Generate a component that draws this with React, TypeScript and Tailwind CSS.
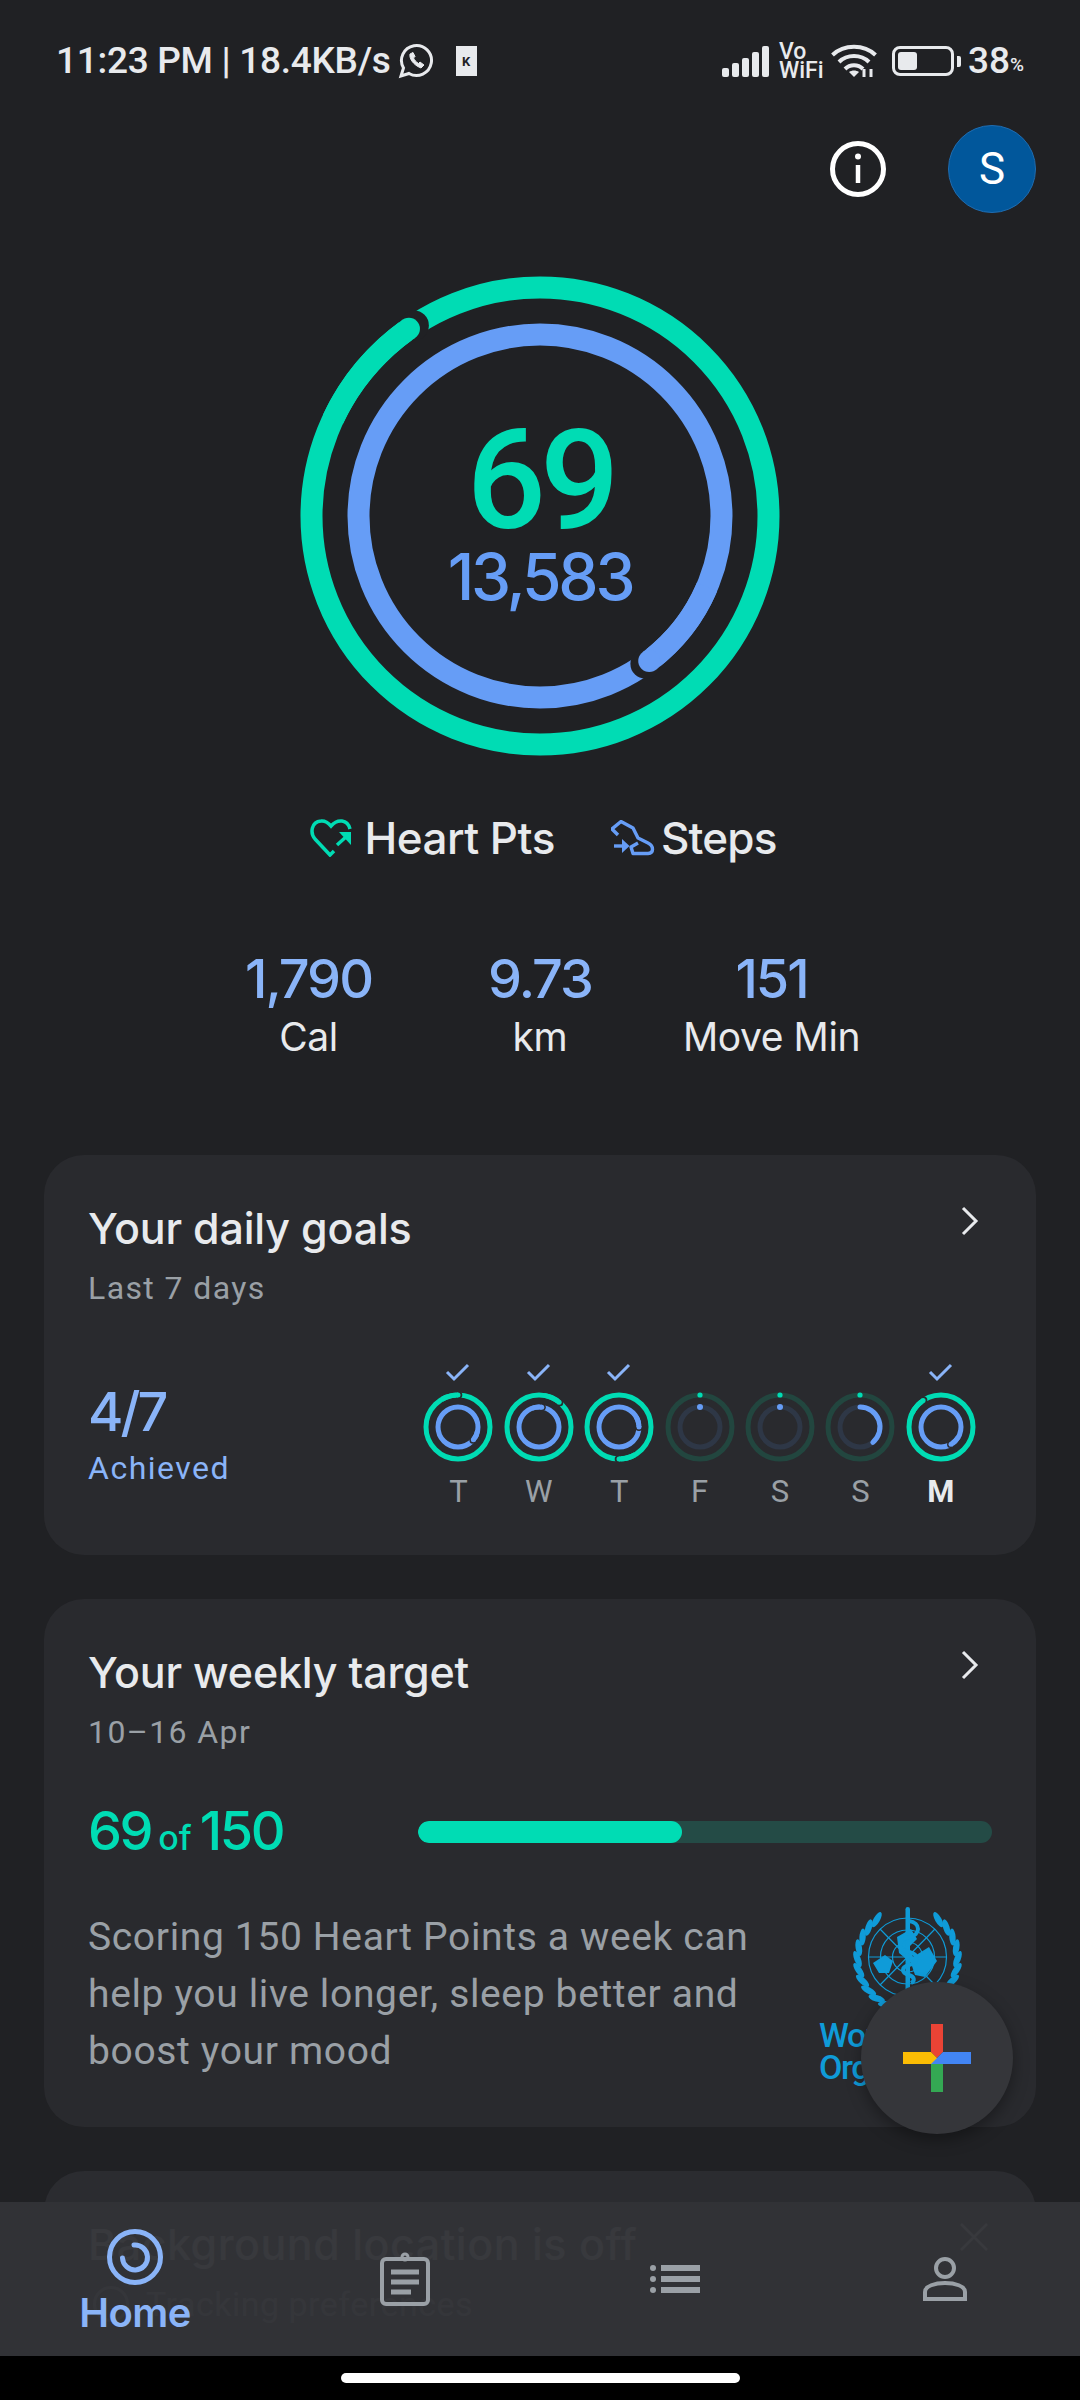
const GREEN = "#00dcb4";
const BLUE = "#669df6";

const polar = (cx: number, cy: number, r: number, deg: number) => {
  const a = (deg * Math.PI) / 180;
  return [cx + r * Math.sin(a), cy - r * Math.cos(a)];
};

const arc = (cx: number, cy: number, r: number, from: number, to: number) => {
  const [x1, y1] = polar(cx, cy, r, from);
  const [x2, y2] = polar(cx, cy, r, to);
  const large = to - from > 180 ? 1 : 0;
  return `M${x1} ${y1} A${r} ${r} 0 ${large} 1 ${x2} ${y2}`;
};

// a ring that went over its goal: full circle, then the second lap's head with a small gap round it
type LapProps = { c: number; r: number; w: number; color: string; end: number; gap: string; pad: number };

const LapRing = ({ c, r, w, color, end, gap, pad }: LapProps) => {
  const [hx, hy] = polar(c, c, r, end);
  const [sx, sy] = polar(c, c, r, end + 1.5);
  return (
    <>
      <circle cx={c} cy={c} r={r} fill="none" stroke={color} strokeWidth={w} />
      <circle cx={sx} cy={sy} r={w / 2 + pad} fill={gap} />
      <path d={arc(c, c, r, end - 30, end)} fill="none" stroke={color} strokeWidth={w} />
      <circle cx={hx} cy={hy} r={w / 2} fill={color} />
    </>
  );
};

type DayProps = { day: string; done?: boolean; today?: boolean; green?: number; blue?: number };

const DayRing = ({ day, done, today, green = 0, blue = 0 }: DayProps) => (
  <div className="flex w-[80.4px] flex-col items-center">
    <div className="flex h-[30px] items-center">
      {done && (
        <svg width="26" height="20" viewBox="0 0 26 20" fill="none" stroke="#8ab4f8" strokeWidth="3">
          <path d="M2 9 L9 16 L23 2" />
        </svg>
      )}
    </div>
    <svg width="72" height="72" viewBox="0 0 72 72" className="mt-[3px]">
      {done ? (
        <>
          <LapRing c={36} r={32} w={5} color={GREEN} end={green} gap="#292a2e" pad={1} />
          <LapRing c={36} r={20} w={5} color={BLUE} end={blue} gap="#292a2e" pad={1} />
        </>
      ) : (
        <>
          <circle cx="36" cy="36" r="32" fill="none" stroke="#22463f" strokeWidth="5" />
          <circle cx="36" cy="36" r="20" fill="none" stroke="#2e3746" strokeWidth="5" />
          <circle cx="36" cy="4" r="2.6" fill={GREEN} />
          {blue > 0 ? (
            <path d={arc(36, 36, 20, 0, blue)} fill="none" stroke={BLUE} strokeWidth="5" strokeLinecap="round" />
          ) : (
            <circle cx="36" cy="16" r="3" fill={BLUE} />
          )}
        </>
      )}
    </svg>
    <span
      className={`mt-[11px] font-['Roboto',sans-serif] text-[31px] leading-[36px] ${
        today ? "font-bold text-[#e8eaed]" : "text-[#9aa0a6]"
      }`}
    >
      {day}
    </span>
  </div>
);

const WhoLogo = () => {
  const leaves = [];
  for (let i = 0; i < 11; i++) {
    const deg = 38 + i * 13;
    const [rx, ry] = polar(56.5, 52, 50, deg);
    const [lx, ly] = polar(56.5, 52, 50, -deg);
    const tilt = deg - 90 + 22;
    leaves.push(
      <ellipse key={`r${i}`} cx={rx} cy={ry} rx="3.2" ry="8.5" transform={`rotate(${tilt} ${rx} ${ry})`} />,
      <ellipse key={`l${i}`} cx={lx} cy={ly} rx="3.2" ry="8.5" transform={`rotate(${-tilt} ${lx} ${ly})`} />
    );
  }
  return (
    <svg width="113" height="108" viewBox="0 0 113 108" fill="#0f9bd8">
      {leaves}
      <g fill="none" stroke="#0f9bd8" strokeWidth="1.2">
        <circle cx="56.5" cy="50" r="39" />
        <circle cx="56.5" cy="50" r="27" />
        <circle cx="56.5" cy="50" r="15" />
        <path d="M17.5 50 H95.5 M29 22 L84 78 M84 22 L29 78" />
      </g>
      <path d="M22 56 L34 48 L42 54 L38 66 L28 66 Z M46 30 L60 22 L66 32 L58 40 L62 50 L78 40 L86 54 L74 70 L64 68 L60 56 L48 46 Z" />
      <rect x="54.5" y="0" width="4.5" height="100" rx="2.2" />
      <path
        d="M58 14 C70 16 70 28 58 30 C46 33 46 43 58 45 C68 47 68 55 58 58 C50 60 50 66 58 68 C64 70 64 74 60 76"
        fill="none"
        stroke="#0f9bd8"
        strokeWidth="4"
      />
    </svg>
  );
};

const Chevron = () => (
  <svg
    width="18"
    height="30"
    viewBox="0 0 18 30"
    fill="none"
    stroke="#e8eaed"
    strokeWidth="3"
    className="absolute right-[13px] top-[3px]"
  >
    <path d="M2 2 L15 15 L2 28" />
  </svg>
);

const CardHeader = ({ title, sub }: { title: string; sub: string }) => (
  <div className="relative">
    <h2 className="font-['Inter',sans-serif] text-[43px] font-medium leading-[50px] tracking-[-0.2px] text-[#e8eaed]">
      {title}
    </h2>
    <p className="mt-[16px] font-['Roboto',sans-serif] text-[32px] leading-[38px] tracking-[1.4px] text-[#9aa0a6]">
      {sub}
    </p>
    <Chevron />
  </div>
);

const Stat = ({ value, label }: { value: string; label: string }) => (
  <div className="flex w-[231.5px] flex-col items-center">
    <span className="font-['Inter',sans-serif] text-[54px] font-medium leading-[60px] tracking-[-2px] text-[#8ab4f8]">
      {value}
    </span>
    <span className="mt-[5px] font-['Inter',sans-serif] text-[39px] leading-[46px] tracking-[-0.4px] text-[#e8eaed]">
      {label}
    </span>
  </div>
);

export default function App() {
  return (
    <div className="relative h-[2400px] w-[1080px] overflow-hidden bg-[#202124]">
      {/* Barra de estado */}
      <div className="flex h-[120px] items-center justify-between pl-[56px] pr-[56px] pt-[2px] font-['Roboto',sans-serif] text-[#e8eaed]">
        <div className="flex items-center">
          <span className="text-[37px] font-medium leading-[44px] tracking-[-0.3px]">11:23 PM | 18.4KB/s</span>
          <svg width="36" height="36" viewBox="0 0 36 36" fill="none" stroke="#e8eaed" strokeWidth="3" className="ml-[7px]">
            <path d="M3 33 L5.5 25 A15 15 0 1 1 11 30.5 Z" />
            <path
              d="M12 11 C11 15 15 22 23 25 L26 22 L22 19 L20.5 20.5 C18 19 16.5 17 15.5 15 L17 13.5 L15 9.5 Z"
              fill="#e8eaed"
              strokeWidth="1"
            />
          </svg>
          <div className="ml-[22px] flex h-[30px] w-[21px] items-center justify-center border-y-[2px] border-[#e8eaed] bg-[#e8eaed] text-[13px] font-bold leading-none text-[#202124]">
            K
          </div>
        </div>
        <div className="flex items-center">
          <svg width="48" height="31" viewBox="0 0 48 31" fill="#e8eaed">
            <rect x="0" y="22" width="7" height="9" rx="2" />
            <rect x="10" y="17" width="7" height="14" rx="2" />
            <rect x="20" y="12" width="7" height="19" rx="2" />
            <rect x="30" y="6" width="7" height="25" rx="2" />
            <rect x="40" y="0" width="7" height="31" rx="2" />
          </svg>
          <div className="ml-[9px] flex w-[44px] flex-col text-[23px] font-medium leading-[19px]">
            <span>Vo</span>
            <span>WiFi</span>
          </div>
          <svg width="46" height="34" viewBox="0 0 46 34" fill="none" stroke="#e8eaed" strokeWidth="4" className="ml-[8px]">
            <path d="M1.5 11 C13 0 33 0 44.5 11" />
            <path d="M8 18 C16 10 30 10 38 18" />
            <path d="M14 25 C19 20 27 20 32 25" />
            <path d="M23 33 L18 28 C21 26 25 26 28 28 Z" fill="#e8eaed" stroke="none" />
            <path d="M33 33 V25 M40 33 V25" strokeWidth="3" />
          </svg>
          <div className="relative ml-[15px] flex h-[30px] w-[62px] items-center rounded-[8px] border-[3px] border-[#e8eaed] pl-[3px]">
            <div className="h-[18px] w-[19px] rounded-[3px] bg-[#e8eaed]" />
          </div>
          <div className="ml-[3px] h-[11px] w-[4px] rounded-r-[2px] bg-[#e8eaed]" />
          <span className="ml-[7px] text-[37px] font-medium leading-[44px]">38</span>
          <span className="mt-[8px] text-[19px] font-medium leading-[24px]">%</span>
        </div>
      </div>

      {/* Acciones */}
      <div className="mt-[5px] flex items-center justify-end gap-[61px] pr-[44px]">
        <svg width="58" height="58" viewBox="0 0 58 58" fill="none" stroke="#ffffff" strokeWidth="5">
          <circle cx="29" cy="29" r="25.5" />
          <path d="M29 25 V43" strokeWidth="4.5" />
          <circle cx="29" cy="16.5" r="3" fill="#ffffff" stroke="none" />
        </svg>
        <div className="flex h-[88px] w-[88px] items-center justify-center rounded-full border border-[#1f6cb0] bg-[#01579b] font-['Roboto',sans-serif] text-[44px] text-white">
          S
        </div>
      </div>

      {/* Anillos */}
      <div className="relative mx-auto mt-[63px] flex h-[480px] w-[480px] flex-col items-center justify-center">
        <svg width="480" height="480" viewBox="0 0 480 480" className="absolute inset-0">
          <LapRing c={240} r={228.5} w={22} color={GREEN} end={325} gap="#202124" pad={4} />
          <LapRing c={240} r={181.5} w={22} color={BLUE} end={143} gap="#202124" pad={4} />
        </svg>
        <span className="mt-[2px] font-['Roboto',sans-serif] text-[140px] font-medium leading-[122px] tracking-[-6px] text-[#00dcb4]">
          69
        </span>
        <span className="mt-[-2px] font-['Inter',sans-serif] text-[64px] font-medium leading-[76px] tracking-[-3.2px] text-[#669df6]">
          13,583
        </span>
      </div>

      {/* Leyenda */}
      <div className="mt-[57px] flex items-center justify-center pl-[7px]">
        <svg width="42" height="38" viewBox="0 0 42 38" fill="none" stroke={GREEN} strokeWidth="3.5">
          <path d="M24 32 L20 36 L5 20 C0 14 1 3 11 2 C15 1.5 18 3.5 21 7 C24 3.5 28 1.5 32 2 C36 2.5 39 6 40 10" />
          <path d="M27 26 L37 17" />
          <path d="M29 13 H41 V26 Z" fill={GREEN} stroke="none" />
        </svg>
        <span className="ml-[12px] font-['Inter',sans-serif] text-[44px] font-medium leading-[50px] tracking-[-0.5px] text-[#e8eaed]">
          Heart Pts
        </span>
        <svg
          width="44"
          height="36"
          viewBox="0 0 44 36"
          fill="none"
          stroke={BLUE}
          strokeWidth="3.4"
          strokeLinejoin="round"
          className="ml-[56px]"
        >
          <path d="M7 15 L1 9 L10 1.5 L22 8 L27 18 L37 23 C43 26 43 33 37 33.5 H22 L20 27 L27 23" />
          <path d="M3 26 H12" />
          <path d="M11 19 L18.5 26 L11 33 Z" fill={BLUE} stroke="none" />
        </svg>
        <span className="ml-[6px] font-['Inter',sans-serif] text-[44px] font-medium leading-[50px] tracking-[-0.8px] text-[#e8eaed]">
          Steps
        </span>
      </div>

      {/* Estadísticas */}
      <div className="mt-[86px] flex justify-center">
        <Stat value="1,790" label="Cal" />
        <Stat value="9.73" label="km" />
        <Stat value="151" label="Move Min" />
      </div>

      {/* Tarjetas */}
      <div className="mx-[44px] mt-[95px] flex flex-col gap-[44px]">
        <section className="h-[400px] rounded-[40px] bg-[#292a2e] px-[44px] pt-[48px]">
          <CardHeader title="Your daily goals" sub="Last 7 days" />
          <div className="mt-[51px] flex items-start justify-between">
            <div className="mt-[24px] flex flex-col">
              <span className="font-['Inter',sans-serif] text-[54px] font-medium leading-[60px] tracking-[-3px] text-[#8ab4f8]">
                4/7
              </span>
              <span className="mt-[7px] font-['Roboto',sans-serif] text-[32px] leading-[38px] tracking-[1.5px] text-[#8ab4f8]">
                Achieved
              </span>
            </div>
            <div className="mr-[11px] flex">
              <DayRing day="T" done green={0} blue={130} />
              <DayRing day="W" done green={39} blue={8} />
              <DayRing day="T" done green={180} blue={90} />
              <DayRing day="F" />
              <DayRing day="S" />
              <DayRing day="S" blue={140} />
              <DayRing day="M" done today green={326} blue={150} />
            </div>
          </div>
        </section>

        <section className="h-[528px] rounded-[40px] bg-[#292a2e] px-[44px] pt-[48px]">
          <CardHeader title="Your weekly target" sub="10–16 Apr" />
          <div className="mt-[50px] flex items-center justify-between">
            <div className="flex items-baseline font-['Inter',sans-serif] font-medium text-[#00dcb4]">
              <span className="text-[54px] leading-[60px] tracking-[-2.4px]">69</span>
              <span className="ml-[7px] text-[34px] leading-[60px]">of</span>
              <span className="ml-[8px] text-[54px] leading-[60px] tracking-[-2.4px]">150</span>
            </div>
            <div className="mb-[5px] h-[22px] w-[574px] overflow-hidden rounded-full bg-[#244b46]">
              <div className="h-full rounded-full bg-[#00dcb4]" style={{ width: `${(69 / 150) * 100}%` }} />
            </div>
          </div>
          <div className="mt-[41px] flex items-start justify-between">
            <p className="font-['Roboto',sans-serif] text-[39px] leading-[57px] tracking-[0.65px] text-[#9aa0a6]">
              Scoring 150 Heart Points a week can
              <br />
              help you live longer, sleep better and
              <br />
              boost your mood
            </p>
            <div className="mr-[3px] mt-[-2px] flex w-[170px] flex-col">
              <div className="ml-[32px]">
                <WhoLogo />
              </div>
              <div className="mt-[4px] whitespace-nowrap font-['Roboto',sans-serif] text-[34px] font-medium leading-[32px] tracking-[-1.5px] text-[#0f9bd8]">
                World Health
                <br />
                Organization
              </div>
            </div>
          </div>
        </section>

        <section className="h-[400px] rounded-[40px] bg-[#2b2c30] px-[44px] pt-[48px]">
          <div className="flex items-center justify-between">
            <h2 className="font-['Inter',sans-serif] text-[43px] font-medium leading-[50px] tracking-[0.5px] text-[#e8eaed]">
              Background location is off
            </h2>
            <svg width="30" height="30" viewBox="0 0 30 30" fill="none" stroke="#e8eaed" strokeWidth="2.5" className="mr-[3px] mt-[-14px]">
              <path d="M2 2 L28 28 M28 2 L2 28" />
            </svg>
          </div>
          <p className="mt-[16px] flex items-center gap-[17px] pl-[5px] font-['Roboto',sans-serif] text-[34px] leading-[38px] tracking-[0.5px] text-[#9aa0a6]">
            <span className="h-[36px] w-[36px] rounded-full border-[3px] border-[#9aa0a6]" />
            Tracking preferences
          </p>
        </section>
      </div>

      {/* Botón flotante */}
      <div className="absolute left-[861px] top-[1982px] flex h-[152px] w-[152px] items-center justify-center rounded-full bg-[#35363a] shadow-[0_6px_16px_rgba(0,0,0,0.35)]">
        <svg width="68" height="68" viewBox="0 0 68 68">
          <path d="M28 0 H40 V28 L34 34 L28 28 Z" fill="#ea4335" />
          <path d="M0 28 H28 L34 34 V40 H0 Z" fill="#fbbc04" />
          <path d="M40 28 H68 V40 H28 L34 34 Z" fill="#4285f4" />
          <path d="M28 40 H40 V68 H28 Z" fill="#34a853" />
        </svg>
      </div>

      {/* Navegación inferior */}
      <div className="absolute inset-x-0 bottom-0">
        <nav className="grid h-[154px] grid-cols-4 bg-[#323337]/[0.97]">
          <div className="flex flex-col items-center pt-[26px]">
            <svg width="58" height="58" viewBox="0 0 58 58" fill="none" stroke="#8ab4f8" strokeWidth="5">
              <circle cx="29" cy="29" r="25.5" />
              <path d="M28 17 A12.5 12.5 0 1 1 16.5 30" strokeLinecap="round" />
            </svg>
            <span className="mt-[5px] font-['Inter',sans-serif] text-[40px] font-semibold leading-[44px] tracking-[-0.6px] text-[#8ab4f8]">
              Home
            </span>
          </div>
          <div className="flex justify-center pt-[50px]">
            <svg width="50" height="54" viewBox="0 0 50 54" fill="none" stroke="#9aa0a6" strokeWidth="4">
              <rect x="2" y="7" width="46" height="45" rx="4" />
              <circle cx="25" cy="5" r="3" strokeWidth="3" />
              <path d="M11 20 H39 M11 30 H39 M11 40 H31" strokeWidth="5" />
            </svg>
          </div>
          <div className="flex justify-center pt-[63px]">
            <svg width="50" height="28" viewBox="0 0 50 28" fill="#9aa0a6">
              <circle cx="3" cy="3" r="3" />
              <circle cx="3" cy="14" r="3" />
              <circle cx="3" cy="25" r="3" />
              <rect x="11" y="0" width="39" height="6" />
              <rect x="11" y="11" width="39" height="6" />
              <rect x="11" y="22" width="39" height="6" />
            </svg>
          </div>
          <div className="flex justify-center pt-[55px]">
            <svg width="44" height="44" viewBox="0 0 44 44" fill="none" stroke="#9aa0a6" strokeWidth="4">
              <circle cx="22" cy="11" r="9" />
              <path d="M2 42 V35 C2 29 12 26 22 26 C32 26 42 29 42 35 V42 Z" />
            </svg>
          </div>
        </nav>
        <div className="flex h-[44px] justify-center bg-black pt-[17px]">
          <div className="h-[10px] w-[399px] rounded-full bg-white" />
        </div>
      </div>
    </div>
  );
}
